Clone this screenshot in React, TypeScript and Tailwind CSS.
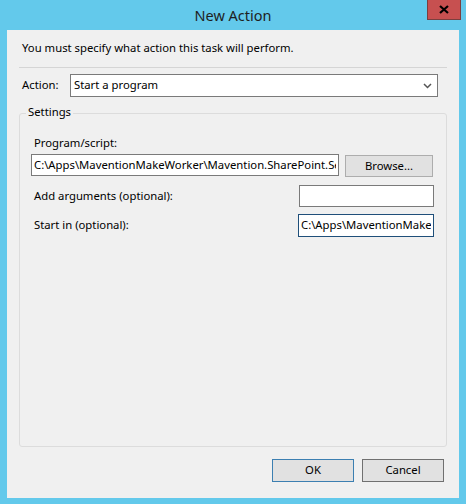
import React from 'react';

const font = { fontFamily: '"Noto Sans", "Open Sans", sans-serif' };

const App = () => {
  return (
    <div
      className="w-[466px] h-[504px] bg-[#63c9eb] flex flex-col text-[11.3px] text-black overflow-hidden"
      style={font}
    >
      {/* Title bar */}
      <div className="relative h-[30px] flex items-center justify-center">
        <span className="text-[14.5px] text-[#1e1e1e] mt-[1px]">New Action</span>
        <button className="absolute right-[5px] top-0 w-[34px] h-[20px] bg-[#c75050] border border-[#7a3f3f] border-t-0 flex items-center justify-center">
          <svg width="10" height="9" viewBox="0 0 10 9">
            <path d="M1 1 L9 8 M9 1 L1 8" stroke="#000" strokeWidth="2.2" />
          </svg>
        </button>
      </div>

      {/* Client area */}
      <div className="mx-[7px] h-[468px] bg-[#f0f0f0] flex flex-col px-[12px]">
        <div className="pt-[10px] pl-[3px] h-[26px] leading-[16px]">
          You must specify what action this task will perform.
        </div>
        <div className="h-[1px] bg-[#d5d5d5] mt-[11px]" />

        <div className="flex items-center mt-[6px] ml-[3px]">
          <span className="w-[48px]">Action:</span>
          <div className="flex-1 mr-[9px] h-[23px] bg-white border border-[#7a7a7a] flex items-center justify-between pl-[3px] pr-[5px]">
            <span>Start a program</span>
            <svg width="9" height="6" viewBox="0 0 9 6">
              <path d="M1 1 L4.5 4.5 L8 1" stroke="#555" strokeWidth="1.5" fill="none" />
            </svg>
          </div>
        </div>

        {/* Settings group */}
        <div className="relative mt-[16px] h-[334px] border border-[#dcdcdc] rounded-[3px] flex flex-col px-[11px]">
          <span className="absolute -top-[10px] left-[6px] px-[2px] bg-[#f0f0f0] leading-[16px]">Settings</span>
          <div className="mt-[21px] ml-[3px] leading-[16px]">Program/script:</div>
          <div className="flex mt-[3px]">
            <div className="w-[308px] h-[22px] bg-white border border-[#7a7a7a] flex items-center pl-[2px] overflow-hidden">
              <span className="block w-[302px] overflow-hidden whitespace-nowrap">
                C:\Apps\MaventionMakeWorker\Mavention.SharePoint.Setup
              </span>
            </div>
            <button className="ml-[6px] mt-[1px] w-[88px] h-[22px] bg-[#e1e1e1] border border-[#adadad] flex items-center justify-center">
              Browse...
            </button>
          </div>
          <div className="flex items-center justify-between mt-[8px] mr-[1px]">
            <span className="ml-[3px]">Add arguments (optional):</span>
            <div className="w-[135px] h-[22px] bg-white border border-[#7a7a7a]" />
          </div>
          <div className="flex items-center justify-between mt-[7px] mr-[1px]">
            <span className="ml-[3px]">Start in (optional):</span>
            <div className="w-[136px] h-[23px] bg-white border border-[#1f4f7a] flex items-center pl-[2px] overflow-hidden">
              <span className="block w-[130px] overflow-hidden whitespace-nowrap">C:\Apps\MaventionMakeWorker</span>
            </div>
          </div>
        </div>

        <div className="flex justify-end gap-[8px] mt-[12px] mr-[3px]">
          <button className="w-[82px] h-[23px] bg-[#e1e1e1] border border-[#3c7fb1] flex items-center justify-center">
            OK
          </button>
          <button className="w-[82px] h-[23px] bg-[#e1e1e1] border border-[#707070] flex items-center justify-center">
            Cancel
          </button>
        </div>
      </div>
    </div>
  );
};

export default App;
